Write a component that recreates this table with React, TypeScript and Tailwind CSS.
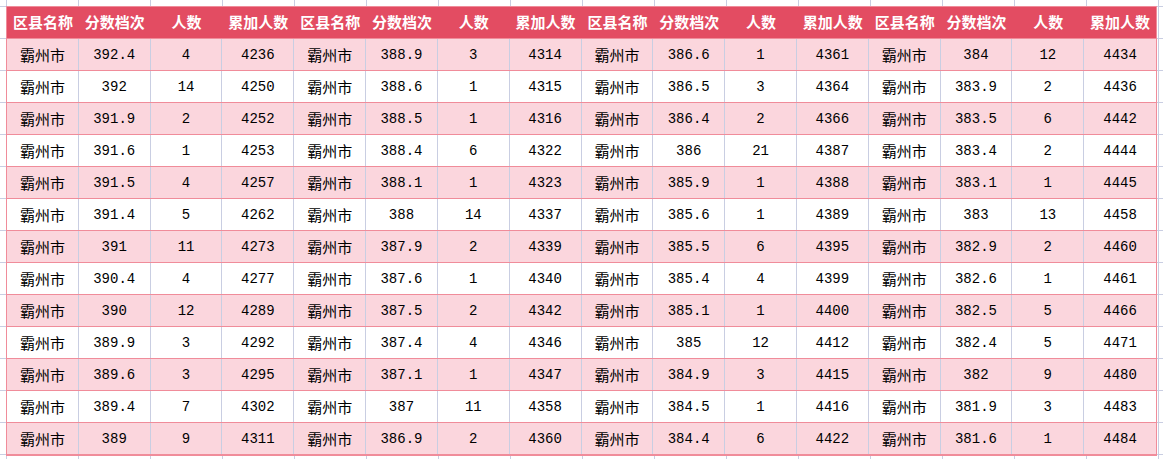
const HEADERS = ["区县名称", "分数档次", "人数", "累加人数"];

// [score, count, cumulative] per block of four columns
const BLOCKS: [string, number, number][][] = [
  [
    ["392.4", 4, 4236], ["392", 14, 4250], ["391.9", 2, 4252], ["391.6", 1, 4253],
    ["391.5", 4, 4257], ["391.4", 5, 4262], ["391", 11, 4273], ["390.4", 4, 4277],
    ["390", 12, 4289], ["389.9", 3, 4292], ["389.6", 3, 4295], ["389.4", 7, 4302],
    ["389", 9, 4311],
  ],
  [
    ["388.9", 3, 4314], ["388.6", 1, 4315], ["388.5", 1, 4316], ["388.4", 6, 4322],
    ["388.1", 1, 4323], ["388", 14, 4337], ["387.9", 2, 4339], ["387.6", 1, 4340],
    ["387.5", 2, 4342], ["387.4", 4, 4346], ["387.1", 1, 4347], ["387", 11, 4358],
    ["386.9", 2, 4360],
  ],
  [
    ["386.6", 1, 4361], ["386.5", 3, 4364], ["386.4", 2, 4366], ["386", 21, 4387],
    ["385.9", 1, 4388], ["385.6", 1, 4389], ["385.5", 6, 4395], ["385.4", 4, 4399],
    ["385.1", 1, 4400], ["385", 12, 4412], ["384.9", 3, 4415], ["384.5", 1, 4416],
    ["384.4", 6, 4422],
  ],
  [
    ["384", 12, 4434], ["383.9", 2, 4436], ["383.5", 6, 4442], ["383.4", 2, 4444],
    ["383.1", 1, 4445], ["383", 13, 4458], ["382.9", 2, 4460], ["382.6", 1, 4461],
    ["382.5", 5, 4466], ["382.4", 5, 4471], ["382", 9, 4480], ["381.9", 3, 4483],
    ["381.6", 1, 4484],
  ],
];

const cjk = "font-['Noto_Sans_CJK_SC',sans-serif]";
const mono = "font-['Liberation_Mono','Noto_Sans_CJK_SC',monospace]";

export default function App() {
  const rows = BLOCKS[0].map((_, i) => BLOCKS.map((b) => b[i]));

  return (
    <div className="w-[1163px] h-[459px] overflow-hidden bg-white bg-[image:linear-gradient(to_right,#c9cee2_1px,transparent_1px),linear-gradient(to_bottom,#c9cee2_1px,transparent_1px)] bg-size-[72px_32px] bg-position-[6px_6px] pt-[6px] pl-[6px]">
      <div className="w-[1151px] border border-[#f08c9a] bg-white text-black">
        <div className="grid grid-cols-16 h-[32px] bg-[#e34c62] border-b border-[#f08c9a]">
          {BLOCKS.map((_, bi) =>
            HEADERS.map((h) => (
              <div
                key={bi + h}
                className={`flex items-center justify-center text-white font-bold text-[15px] ${cjk}`}
              >
                {h}
              </div>
            ))
          )}
        </div>
        {rows.map((row, ri) => (
          <div
            key={ri}
            className={`grid grid-cols-16 h-[32px] border-b border-[#f08c9a] ${
              ri % 2 === 0 ? "bg-[#fbd6dd]" : "bg-white"
            }`}
          >
            {row.map(([score, count, cum], bi) => (
              <div key={bi} className="contents">
                <div className={`flex items-center justify-center pt-px border-r border-[#c9cee2] text-[15px] ${cjk}`}>
                  霸州市
                </div>
                <div className={`flex items-center justify-center pt-px border-r border-[#c9cee2] text-[14px] ${mono}`}>
                  {score}
                </div>
                <div className={`flex items-center justify-center pt-px border-r border-[#c9cee2] text-[14px] ${mono}`}>
                  {count}
                </div>
                <div
                  className={`flex items-center justify-center pt-px text-[14px] ${mono} ${
                    bi < 3 ? "border-r border-[#c9cee2]" : ""
                  }`}
                >
                  {cum}
                </div>
              </div>
            ))}
          </div>
        ))}
      </div>
    </div>
  );
}
